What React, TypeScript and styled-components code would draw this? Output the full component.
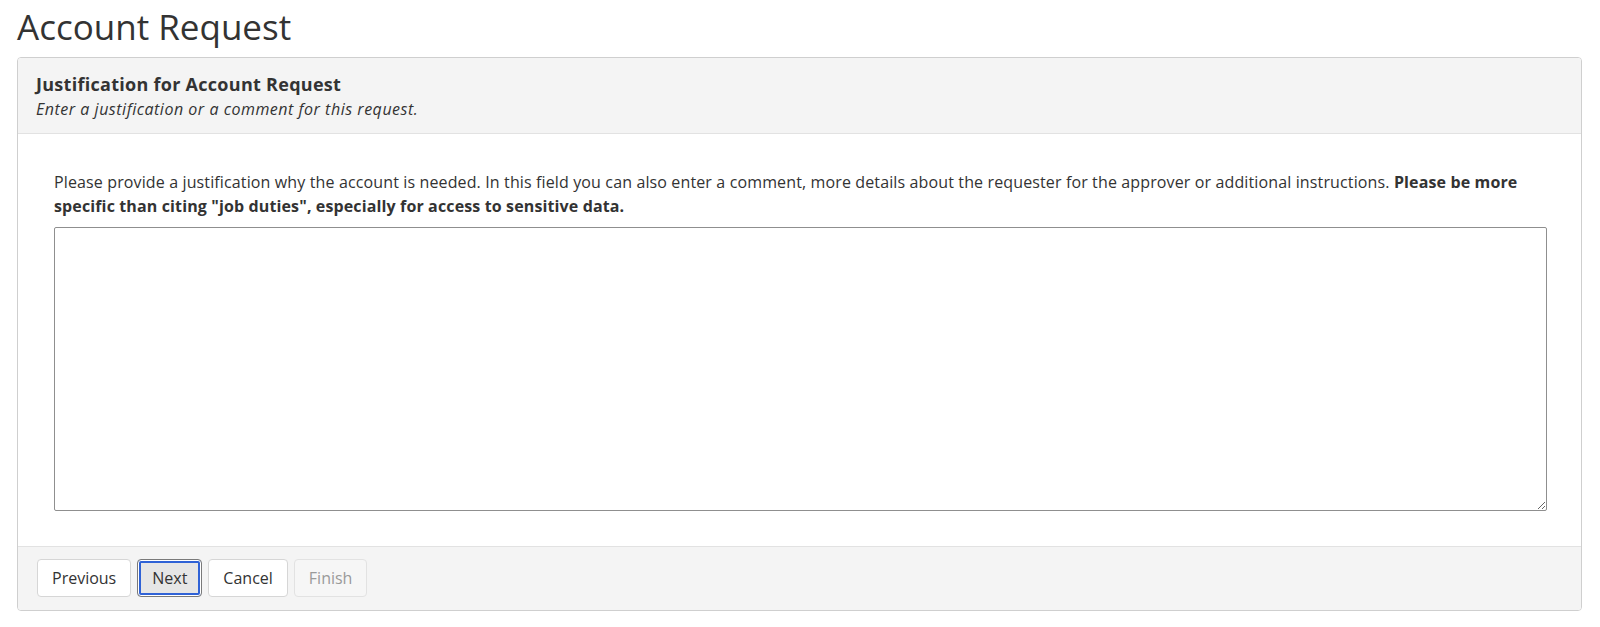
import React from "react";
import styled, { createGlobalStyle } from "styled-components";

const Global = createGlobalStyle`
  html, body { margin: 0; padding: 0; background: #fff; }
  body { font-family: "Open Sans", "Liberation Sans", sans-serif; color: #333; }
  * { box-sizing: border-box; }
`;

const Page = styled.div`
  padding: 0 18px 0 17px;
`;

const Title = styled.h1`
  margin: 0;
  padding-top: 3px;
  font-size: 35px;
  font-weight: 400;
  line-height: 48px;
  color: #333;
  height: 57px;
`;

const Panel = styled.section`
  border: 1px solid #cfcfcf;
  border-radius: 4px;
  background: #fff;
  overflow: hidden;
`;

const PanelHeader = styled.header`
  background: #f4f4f4;
  border-bottom: 1px solid #e2e2e2;
  padding: 13px 18px 0 18px;
  height: 76px;
`;

const PanelTitle = styled.h2`
  margin: 0;
  font-size: 18px;
  font-weight: 700;
  letter-spacing: 0.28px;
  line-height: 26px;
`;

const PanelSub = styled.p`
  margin: 0;
  font-size: 16px;
  font-style: italic;
  letter-spacing: 0.52px;
  line-height: 24px;
`;

const PanelBody = styled.div`
  padding: 36px 34px 35px 36px;
`;

const Help = styled.p`
  margin: 0 0 9px;
  font-size: 16px;
  letter-spacing: 0.13px;
  line-height: 24px;
  b { font-weight: 700; }
`;

const TextArea = styled.textarea`
  display: block;
  width: 100%;
  height: 284px;
  border: 1px solid #8f8f8f;
  border-radius: 2px;
  resize: vertical;
  font-family: inherit;
  font-size: 16px;
  padding: 6px 8px;
  outline: none;
`;

const PanelFooter = styled.footer`
  background: #f4f4f4;
  border-top: 1px solid #e2e2e2;
  padding: 12px 19px 13px;
  display: flex;
  gap: 6px;
`;

const Button = styled.button<{ $variant?: "focus" | "disabled" }>`
  height: 38px;
  padding: 0 14px;
  font-family: inherit;
  font-size: 16px;
  border-radius: 4px;
  cursor: pointer;
  border: 1px solid #d6d6d6;
  background: #fff;
  color: #333;
  ${(p) =>
    p.$variant === "focus" &&
    `
    background: #e6e6e6;
    border: 1px solid #7a7a7a;
    box-shadow: inset 0 0 0 1px #fff, inset 0 0 0 3px #2f62d6;
  `}
  ${(p) =>
    p.$variant === "disabled" &&
    `
    background: #f6f6f6;
    border-color: #e2e2e2;
    color: #9a9a9a;
    cursor: default;
  `}
`;

export default function App() {
  return (
    <Page>
      <Global />
      <Title>Account Request</Title>
      <Panel>
        <PanelHeader>
          <PanelTitle>Justification for Account Request</PanelTitle>
          <PanelSub>Enter a justification or a comment for this request.</PanelSub>
        </PanelHeader>
        <PanelBody>
          <Help>
            Please provide a justification why the account is needed. In this field you can also enter a comment, more
            details about the requester for the approver or additional instructions.{" "}
            <b>Please be more specific than citing "job duties", especially for access to sensitive data.</b>
          </Help>
          <TextArea />
        </PanelBody>
        <PanelFooter>
          <Button>Previous</Button>
          <Button $variant="focus">Next</Button>
          <Button>Cancel</Button>
          <Button $variant="disabled" disabled>
            Finish
          </Button>
        </PanelFooter>
      </Panel>
    </Page>
  );
}
